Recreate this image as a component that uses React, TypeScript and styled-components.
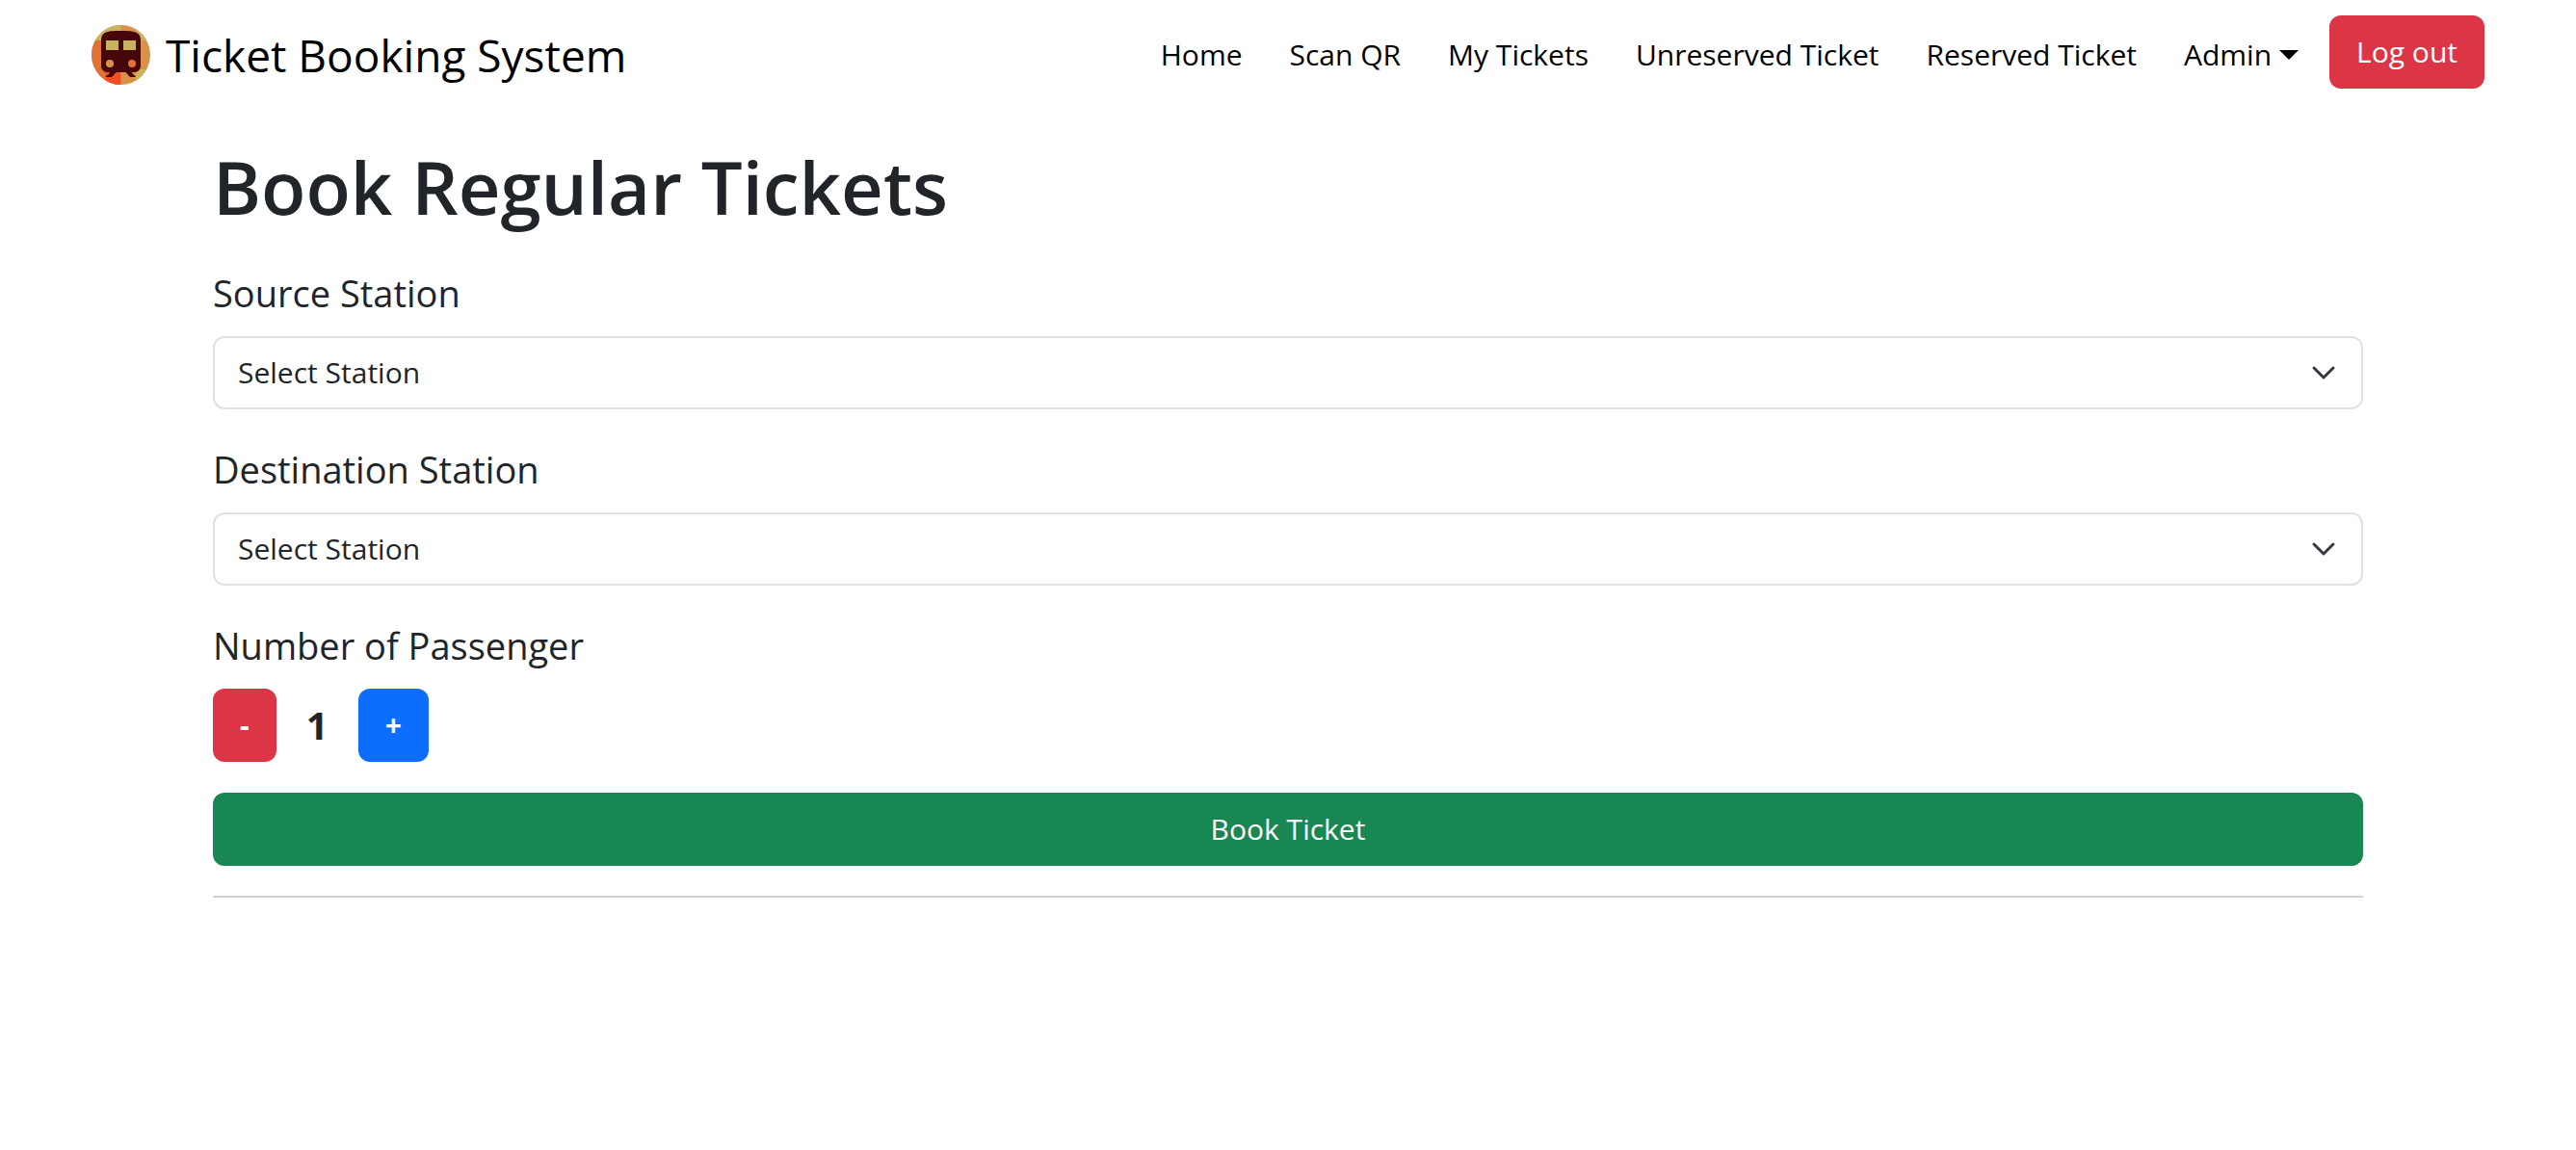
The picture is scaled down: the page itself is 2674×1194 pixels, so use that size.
import React, { useState } from "react";
import styled, { createGlobalStyle } from "styled-components";

const GlobalStyle = createGlobalStyle`
  *, *::before, *::after { box-sizing: border-box; }
  body {
    margin: 0;
    background: #fff;
    color: #212529;
    font-family: "Segoe UI", "Open Sans", "Noto Sans", sans-serif;
    font-size: 30px;
    line-height: 48px;
  }
  button, select { font: inherit; }
`;

const Navbar = styled.header`
  display: flex;
  align-items: center;
  justify-content: space-between;
  padding: 16px 95px 18px;
`;

const Brand = styled.a`
  display: flex;
  align-items: center;
  gap: 16px;
  padding-top: 6px;
  color: #000;
  font-size: 46px;
  line-height: 64px;
  text-decoration: none;
`;

const NavArea = styled.nav`
  display: flex;
  align-items: flex-start;
  gap: 32px;
`;

const NavList = styled.ul`
  display: flex;
  gap: 49px;
  margin: 0;
  padding: 17px 0 0;
  list-style: none;
`;

const NavLink = styled.a`
  display: flex;
  align-items: center;
  gap: 8px;
  color: #000;
  text-decoration: none;
`;

const Caret = styled.span`
  border-top: 10px solid #000;
  border-left: 10px solid transparent;
  border-right: 10px solid transparent;
`;

const Button = styled.button<{ $color: string; $block?: boolean; $strong?: boolean }>`
  display: ${(p) => (p.$block ? "block" : "inline-block")};
  width: ${(p) => (p.$block ? "100%" : "auto")};
  padding: 14px 28px;
  border: 0;
  border-radius: 12px;
  background: ${(p) => p.$color};
  color: #fff;
  font-weight: ${(p) => (p.$strong ? 700 : 400)};
  cursor: pointer;
`;

const Main = styled.main`
  max-width: 2280px;
  margin: 0 auto;
  padding: 0 24px;
`;

const Title = styled.h1`
  margin: 36px 0 32px;
  font-size: 76px;
  font-weight: 600;
  line-height: 96px;
`;

const Field = styled.div`
  display: flex;
  flex-direction: column;
  gap: 15px;
  margin-bottom: 32px;
`;

const Label = styled.label`
  font-size: 38px;
  line-height: 60px;
`;

const SelectBox = styled.div`
  display: grid;
  align-items: center;
  > * { grid-area: 1 / 1; }
  > svg { justify-self: end; margin-right: 25px; pointer-events: none; }
`;

const Select = styled.select`
  width: 100%;
  padding: 12px 72px 12px 24px;
  border: 2px solid #dee2e6;
  border-radius: 12px;
  appearance: none;
  background: #fff;
  color: #212529;
`;

const Stepper = styled.div`
  display: flex;
  align-items: center;
`;

const Count = styled.output`
  width: 85px;
  font-size: 40px;
  font-weight: 700;
  text-align: center;
`;

const Divider = styled.hr`
  height: 2px;
  margin: 31px 0;
  border: 0;
  background: #d0d1d2;
`;

const Logo = () => (
  <svg width="61" height="62" viewBox="0 0 183 186" aria-hidden="true">
    <clipPath id="disc"><ellipse cx="91.5" cy="93" rx="91.5" ry="93" /></clipPath>
    <g clipPath="url(#disc)">
      <rect width="183" height="186" fill="#d8924a" />
      <rect width="91" height="48" fill="#c9b35d" />
      <rect y="48" width="91" height="138" fill="#e07236" />
      <path d="M45 186V145H91V186Z" fill="#f04e23" />
      <path d="M137 0h46v48h-46z" fill="#c9b35d" />
      <path d="M137 138h46v48h-46z" fill="#c9b35d" />
    </g>
    <path d="M91 18c24 0 42 1 50 6 8 4 12 12 12 22v80c0 13-8 21-21 21H51c-13 0-21-8-21-21V46c0-10 4-18 12-22 8-5 25-6 49-6z" fill="#450709" />
    <path d="M60 145h19l-16 17H44v-4l7-2zM104 145h19l9 11 5 2v4h-17z" fill="#450709" />
    <path d="M45 48h39v30H45zM99 48h39v30H99z" fill="#c9b35d" />
    <circle cx="57" cy="120" r="12" fill="#d8924a" />
    <circle cx="126" cy="120" r="12" fill="#e07236" />
  </svg>
);

const Chevron = () => (
  <svg width="32" height="24" viewBox="0 0 16 12" fill="none" aria-hidden="true">
    <path d="M3 3.5l5 5 5-5" stroke="#343a40" strokeWidth="1.5" strokeLinecap="round" strokeLinejoin="round" />
  </svg>
);

const StationField = ({ id, label }: { id: string; label: string }) => (
  <Field>
    <Label htmlFor={id}>{label}</Label>
    <SelectBox>
      <Select id={id} defaultValue="">
        <option value="">Select Station</option>
      </Select>
      <Chevron />
    </SelectBox>
  </Field>
);

const links = ["Home", "Scan QR", "My Tickets", "Unreserved Ticket", "Reserved Ticket"];

export default function App() {
  const [count, setCount] = useState(1);
  return (
    <>
      <GlobalStyle />
      <Navbar>
        <Brand href="#"><Logo />Ticket Booking System</Brand>
        <NavArea>
          <NavList>
            {links.map((text) => <li key={text}><NavLink href="#">{text}</NavLink></li>)}
            <li><NavLink href="#">Admin<Caret /></NavLink></li>
          </NavList>
          <Button type="button" $color="#dc3545">Log out</Button>
        </NavArea>
      </Navbar>
      <Main>
        <Title>Book Regular Tickets</Title>
        <StationField id="source" label="Source Station" />
        <StationField id="destination" label="Destination Station" />
        <Field>
          <Label htmlFor="passengers">Number of Passenger</Label>
          <Stepper>
            <Button type="button" $strong $color="#dc3545" onClick={() => setCount(Math.max(1, count - 1))}>-</Button>
            <Count id="passengers">{count}</Count>
            <Button type="button" $strong $color="#0d6efd" onClick={() => setCount(count + 1)}>+</Button>
          </Stepper>
        </Field>
        <Button type="button" $color="#198754" $block>Book Ticket</Button>
        <Divider />
      </Main>
    </>
  );
}
